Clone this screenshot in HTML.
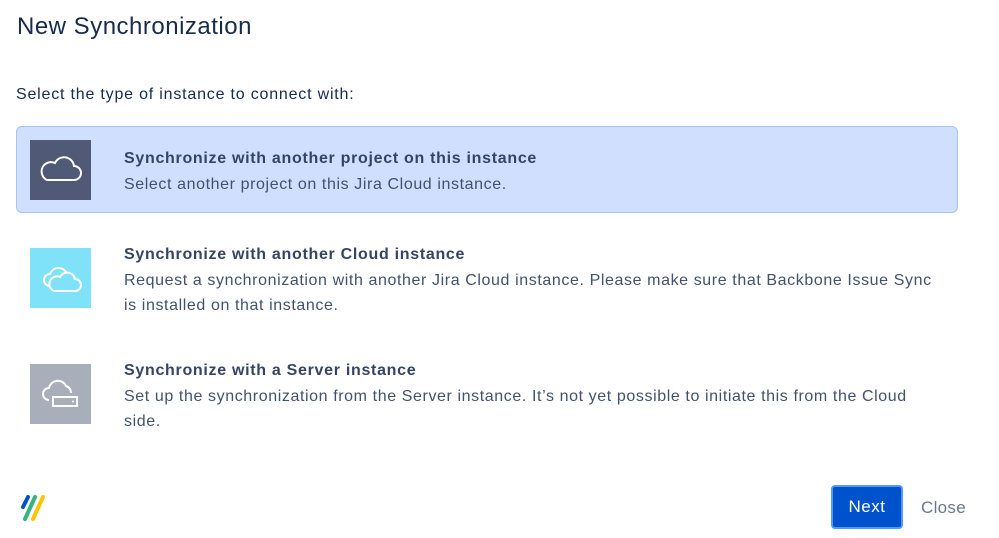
<!DOCTYPE html>
<html><head><meta charset="utf-8"><style>
body{margin:0;width:999px;height:538px;background:#fff;font-family:"Liberation Sans","DejaVu Sans",sans-serif;color:#172b4d;position:relative;overflow:hidden}
.abs{position:absolute}
h1{position:absolute;left:17px;top:13px;margin:0;font-size:24px;font-weight:400;color:#172b4d;letter-spacing:0.5px}
.sub{left:16px;top:86px;font-size:16px;letter-spacing:0.8px}
.sel{left:16px;top:126px;width:940px;height:85px;background:#cfdffd;border:1px solid #a5c4f7;border-radius:6px}
.ic{width:61px;height:60px;left:30px}
.t{left:124px;font-size:16px;line-height:25.5px;color:#42526e;width:820px;letter-spacing:0.6px}
.t b{color:#344563;letter-spacing:0.7px}
.btn{left:831px;top:485px;width:68px;height:40px;background:#0052cc;border:2px solid #4c9aff;border-radius:4px;color:#fff;font-size:17px;text-align:center;line-height:40px;letter-spacing:0.5px}
.close{left:921px;top:498px;font-size:17px;color:#6b778c;letter-spacing:0.3px}
</style></head><body>
<h1>New Synchronization</h1>
<div class="abs sub">Select the type of instance to connect with:</div>
<div class="abs sel"></div>
<svg class="abs ic" style="top:140px" viewBox="0 0 61 60"><rect width="61" height="60" fill="#505a77"/><path d="M17 40h27a7 7 0 0 0 0-14 10 10 0 0 0-19-3 8 8 0 0 0-8 17z" fill="none" stroke="#fff" stroke-width="2"/></svg>
<div class="abs t" style="top:146px"><b>Synchronize with another project on this instance</b><br>Select another project on this Jira Cloud instance.</div>
<svg class="abs ic" style="top:248px" viewBox="0 0 61 60"><rect width="61" height="60" fill="#7fe2f8"/><path d="M20 38a6 6 0 0 1 0-12 9 9 0 0 1 16-2" fill="none" stroke="#fff" stroke-width="2"/><path d="M24 43h21a6 6 0 0 0 0-12 8 8 0 0 0-15-2 7 7 0 0 0-6 14z" fill="none" stroke="#fff" stroke-width="2"/></svg>
<div class="abs t" style="top:242px"><b>Synchronize with another Cloud instance</b><br>Request a synchronization with another Jira Cloud instance. Please make sure that Backbone Issue Sync is installed on that instance.</div>
<svg class="abs ic" style="top:364px" viewBox="0 0 61 60"><rect width="61" height="60" fill="#a9aebb"/><path d="M19 36a6 6 0 0 1 0-12 9 9 0 0 1 17-2 7 7 0 0 1 5 7" fill="none" stroke="#fff" stroke-width="2"/><rect x="23" y="33" width="24" height="9" fill="#a9aebb" stroke="#fff" stroke-width="2"/><circle cx="43" cy="37.5" r="1" fill="#fff"/></svg>
<div class="abs t" style="top:358px"><b>Synchronize with a Server instance</b><br>Set up the synchronization from the Server instance. It’s not yet possible to initiate this from the Cloud side.</div>
<svg class="abs" style="left:15px;top:492px" width="38" height="32" viewBox="0 0 38 32"><path d="M13 5L8 15" stroke="#0052cc" stroke-width="4" stroke-linecap="round"/><path d="M20 5L10 27" stroke="#36b37e" stroke-width="4" stroke-linecap="round"/><path d="M28 5L18 27" stroke="#ffc400" stroke-width="4" stroke-linecap="round"/></svg>
<div class="abs btn">Next</div>
<div class="abs close">Close</div>
</body></html>
